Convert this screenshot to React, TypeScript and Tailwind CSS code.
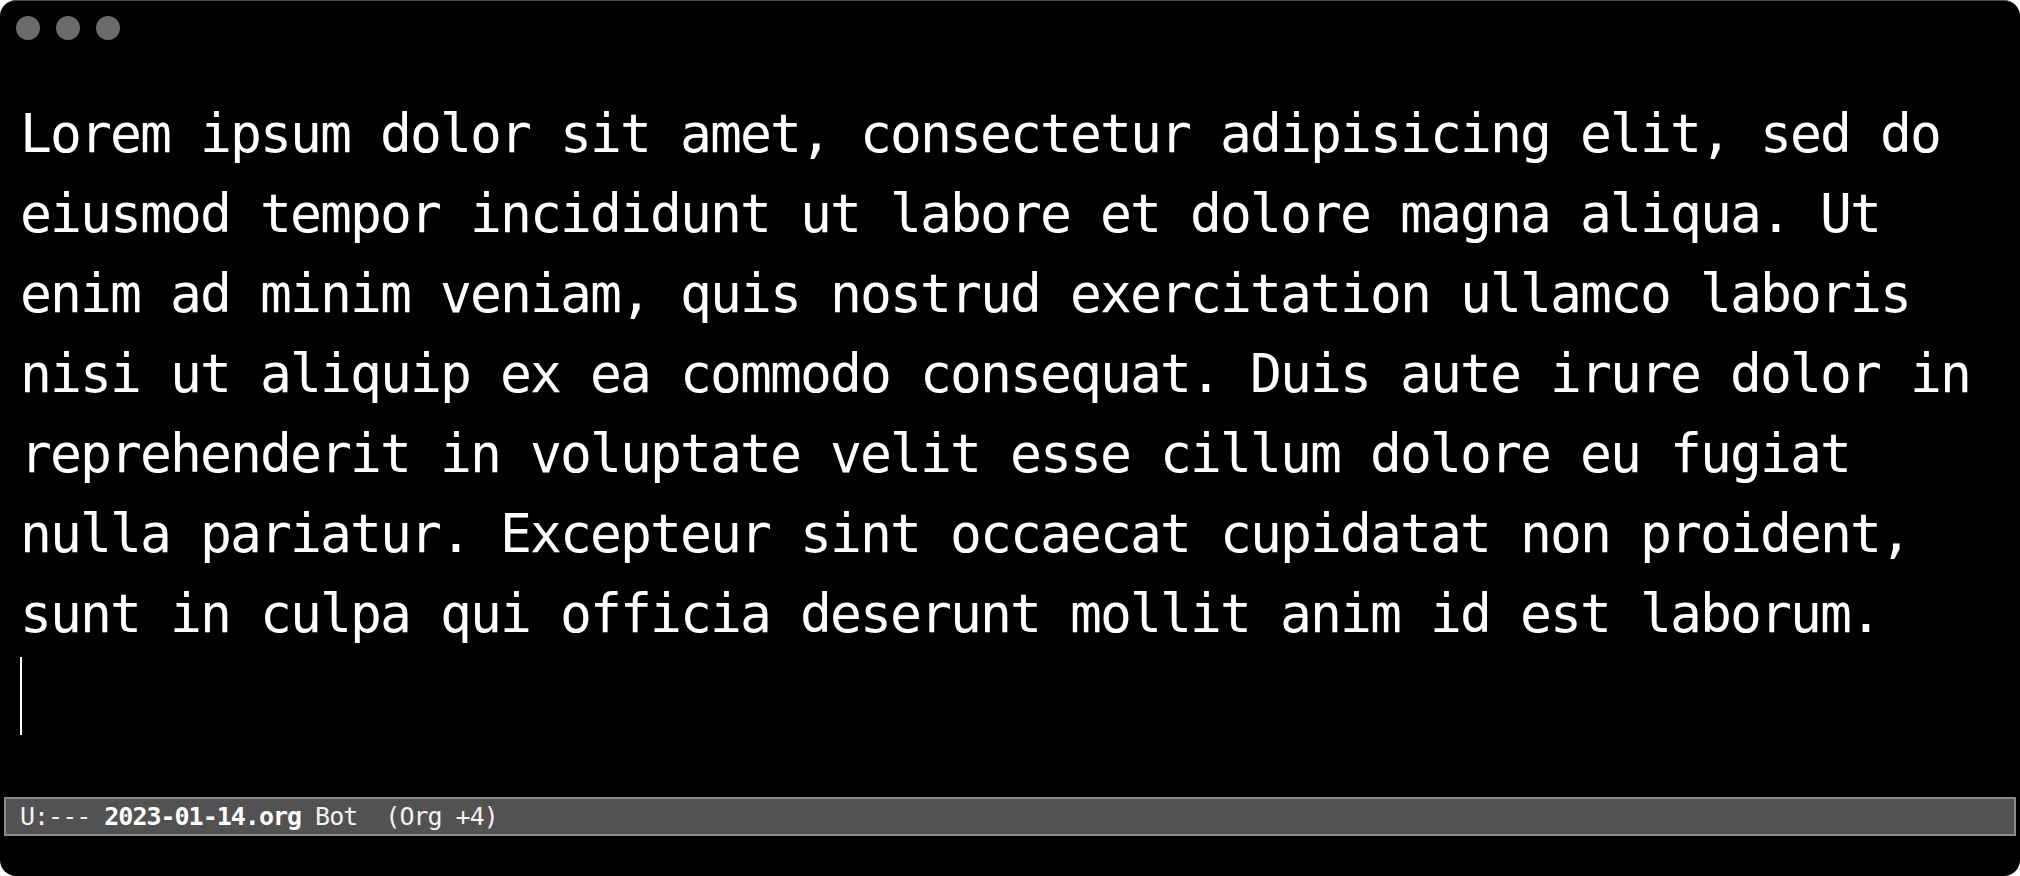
import React from "react";

const lines = [
  "Lorem ipsum dolor sit amet, consectetur adipisicing elit, sed do",
  "eiusmod tempor incididunt ut labore et dolore magna aliqua. Ut",
  "enim ad minim veniam, quis nostrud exercitation ullamco laboris",
  "nisi ut aliquip ex ea commodo consequat. Duis aute irure dolor in",
  "reprehenderit in voluptate velit esse cillum dolore eu fugiat",
  "nulla pariatur. Excepteur sint occaecat cupidatat non proident,",
  "sunt in culpa qui officia deserunt mollit anim id est laborum.",
];

export default function App() {
  return (
    <div className="w-[2020px] h-[876px] bg-white">
      <div className="w-full h-full bg-black rounded-[16px] border-t border-[#4a4a4a] flex flex-col overflow-hidden">
        <div className="flex gap-[16px] pl-[16px] pt-[15px]">
          <div className="w-[24px] h-[24px] rounded-full bg-[#6b6b6b]" />
          <div className="w-[24px] h-[24px] rounded-full bg-[#6b6b6b]" />
          <div className="w-[24px] h-[24px] rounded-full bg-[#6b6b6b]" />
        </div>
        <div
          className="mt-[54px] pl-[20px] text-white text-[53px] leading-[80px] tracking-[-1.91px]"
          style={{ fontFamily: '"DejaVu Sans Mono", monospace' }}
        >
          {lines.map((l, i) => (
            <div key={i} className="h-[80px] whitespace-pre">
              {l}
            </div>
          ))}
          <div className="h-[80px]">
            <div className="w-[2px] h-[78px] mt-[3px] bg-white" />
          </div>
        </div>
        <div className="mt-auto mb-[40px] mx-[4px] h-[39px] border-2 border-[#8c8c8c] bg-[#525252] flex items-center pl-[14px]">
          <div
            className="text-[#f2f2f2] text-[25px] leading-[35px] tracking-[-1px] whitespace-pre"
            style={{ fontFamily: '"DejaVu Sans Mono", monospace' }}
          >
            {"U:--- "}
            <span className="font-bold text-white">2023-01-14.org</span>
            {" Bot  (Org +4)"}
          </div>
        </div>
      </div>
    </div>
  );
}
